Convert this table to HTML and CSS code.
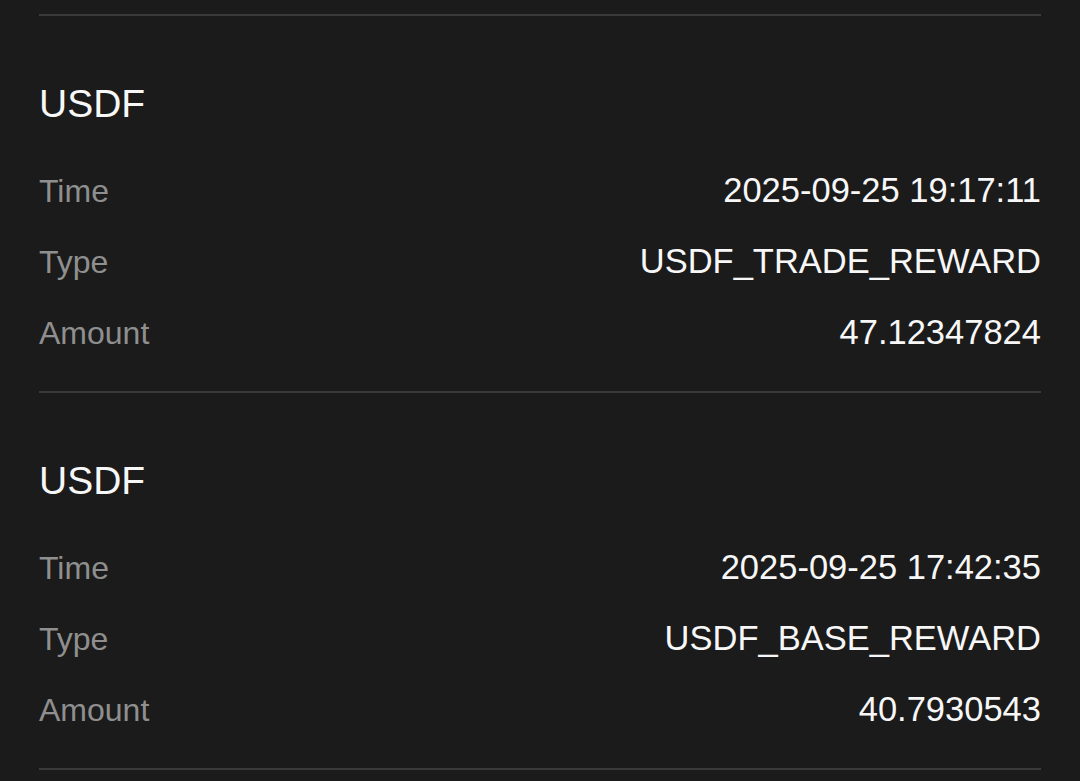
FILE: index.html
```html
<!DOCTYPE html>
<html>
<head>
<meta charset="utf-8">
<link rel="stylesheet" href="styles.css">
</head>
<body>
<div class="list">
  <div class="spacer"></div>
  <div class="card">
    <div class="title">USDF</div>
    <div class="row"><span class="label">Time</span><span class="value">2025-09-25 19:17:11</span></div>
    <div class="row"><span class="label">Type</span><span class="value">USDF_TRADE_REWARD</span></div>
    <div class="row"><span class="label">Amount</span><span class="value">47.12347824</span></div>
  </div>
  <div class="card">
    <div class="title">USDF</div>
    <div class="row"><span class="label">Time</span><span class="value">2025-09-25 17:42:35</span></div>
    <div class="row"><span class="label">Type</span><span class="value">USDF_BASE_REWARD</span></div>
    <div class="row"><span class="label">Amount</span><span class="value">40.7930543</span></div>
  </div>
</div>
</body>
</html>
```
FILE: styles.css
```css
html, body {
  margin: 0;
  padding: 0;
  background: #1b1b1b;
  height: 100%;
  overflow: hidden;
}
body {
  font-family: "Liberation Sans", Arial, sans-serif;
  color: #f7f7f7;
}
.list {
  padding: 0 39px;
}
.spacer {
  height: 14px;
  border-bottom: 2px solid #3a3a3a;
}
.card {
  border-bottom: 2px solid #3a3a3a;
  padding: 68px 0 8px;
}
.title {
  font-size: 39px;
  line-height: 40px;
  margin-bottom: 46px;
}
.row {
  display: flex;
  justify-content: space-between;
  align-items: baseline;
  height: 71px;
  line-height: 40px;
}
.label {
  font-size: 32px;
  color: #8f8f8f;
}
.value {
  font-size: 34.5px;
}
```
